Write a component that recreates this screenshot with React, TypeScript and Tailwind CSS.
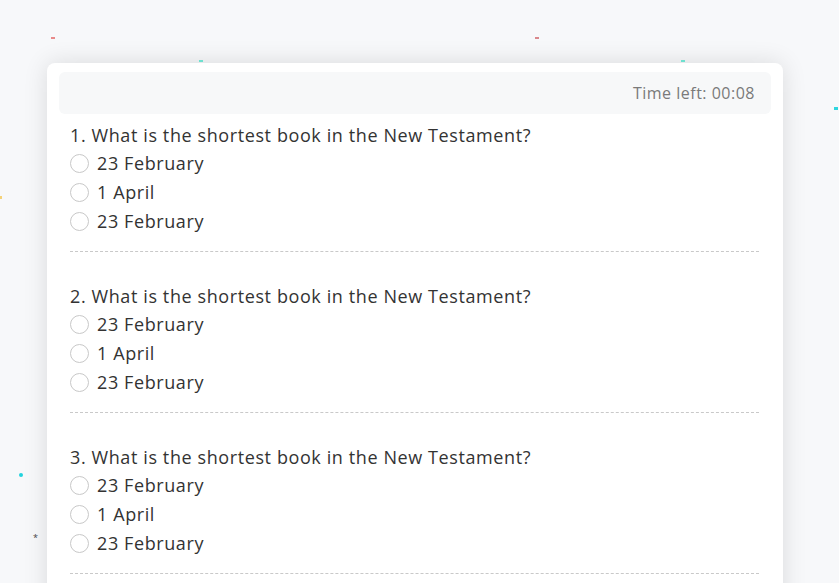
import React from 'react';

const options = ['23 February', '1 April', '23 February'];
const questions = [1, 2, 3];

const dots = [
    { cls: 'left-[51px] top-[37px] w-[4px] h-[1.5px] bg-[#e88a8a]' },
    { cls: 'left-[535px] top-[37px] w-[4px] h-[1.5px] bg-[#d9888c]' },
    { cls: 'left-[199px] top-[60px] w-[4px] h-[2px] bg-[#6ee0cf]' },
    { cls: 'left-[681px] top-[60px] w-[4px] h-[2px] bg-[#6ee0cf]' },
    { cls: 'left-[834px] top-[107px] w-[4px] h-[3px] bg-[#2fd6df]' },
    { cls: 'left-[0px] top-[196px] w-[2px] h-[3px] bg-[#f4d27a]' },
    { cls: 'left-[19px] top-[473px] w-[4px] h-[4px] rounded-full bg-[#22d3dd]' },
];

const Question = ({ n }: { n: number }) => (
    <div className="pl-[11px] pr-3">
        <div className="h-[27px] flex items-center text-[18px] tracking-[0.6px] text-[#333]">
            <span className="-mt-[1px]">{n}. What is the shortest book in the New Testament?</span>
        </div>
        {options.map((o, i) => (
            <label key={i} className="h-[29px] flex items-center">
                <span className="w-[19px] h-[19px] rounded-full border border-[#c8c8c8] bg-white" />
                <span className="ml-2 text-[18px] tracking-[0.6px] text-[#333]">{o}</span>
            </label>
        ))}
        <div className="mt-[15px] mb-[31px] border-t border-dashed border-[#c9c9c9]" />
    </div>
);

export default function App() {
    return (
        <div
            className="relative min-h-screen h-[583px] overflow-hidden bg-[#f7f8fa] pt-[63px] pl-[47px]"
            style={{ fontFamily: '"Open Sans", "Noto Sans", sans-serif' }}
        >
            {dots.map((d, i) => (
                <span key={i} className={`absolute ${d.cls}`} />
            ))}
            <span className="absolute left-[33px] top-[531px] text-[9px] text-[#444]">*</span>
            <div className="w-[736px] rounded-lg bg-white px-3 pt-[9px] pb-3 shadow-[0_0_24px_rgba(0,0,0,0.12)]">
                <div className="h-[42px] rounded-md bg-[#f7f8f9] flex items-center justify-end pr-4 text-[16px] tracking-[0.5px] text-[#7a7a7a]">
                    Time left: 00:08
                </div>
                <div className="mt-2">
                    {questions.map((n) => (
                        <Question key={n} n={n} />
                    ))}
                </div>
            </div>
        </div>
    );
}
